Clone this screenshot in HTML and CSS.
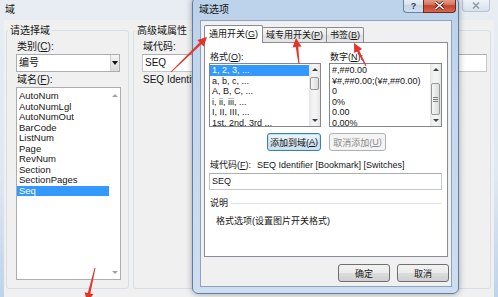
FILE: index.html
```html
<!DOCTYPE html>
<html lang="zh-CN">

<head>
    <meta charset="UTF-8">
    <meta name="viewport" content="width=device-width, initial-scale=1.0">
    <title>域</title>

    <link rel="stylesheet" href="styles.css">
</head>

<body>
    <div class="desk">

        <!-- 后面的 "域" 对话框 -->
        <div class="back">
            <div class="back-caption">
                <span class="back-title">域</span>
                <span class="back-close">
                    <svg width="8" height="7" viewBox="0 0 8 7"><path d="M1 .5 7 6.5M7 .5 1 6.5" stroke="#8d97a3" stroke-width="1.4" fill="none"/></svg>
                </span>
            </div>

            <div class="back-client">
                <div class="group pick">
                    <div class="group-title">请选择域</div>
                    <div class="lbl">类别(<u>C</u>):</div>
                    <div class="combo">
                        <span class="combo-text">编号</span>
                        <span class="combo-btn"><i class="tri-down"></i></span>
                    </div>
                    <div class="lbl">域名(<u>F</u>):</div>
                    <div class="list names">
                        <div class="items">
                            <div class="item">AutoNum</div>
                            <div class="item">AutoNumLgl</div>
                            <div class="item">AutoNumOut</div>
                            <div class="item">BarCode</div>
                            <div class="item">ListNum</div>
                            <div class="item">Page</div>
                            <div class="item">RevNum</div>
                            <div class="item">Section</div>
                            <div class="item">SectionPages</div>
                            <div class="item sel">Seq</div>
                        </div>
                        <div class="sb off">
                            <div class="sb-btn"><i class="tri-up"></i></div>
                            <div class="sb-fill"></div>
                            <div class="sb-btn"><i class="tri-down"></i></div>
                        </div>
                    </div>
                </div>

                <div class="group props">
                    <div class="group-title">高级域属性</div>
                    <div class="lbl">域代码:</div>
                    <div class="field wide">SEQ</div>
                    <div class="lbl">SEQ Identifier</div>
                </div>
            </div>
        </div>

        <!-- 前面的 "域选项" 对话框 -->
        <div class="front">
            <div class="front-caption">
                <span class="front-title">域选项</span>
                <div class="cap-btns">
                    <span class="cap-help">?</span>
                    <span class="cap-close">
                        <svg width="11" height="9" viewBox="0 0 11 9"><path d="M1.5 1 9.5 8M9.5 1 1.5 8" stroke="#4a1a12" stroke-width="3" fill="none"/><path d="M1.5 1 9.5 8M9.5 1 1.5 8" stroke="#fff" stroke-width="1.6" fill="none"/></svg>
                    </span>
                </div>
            </div>

            <div class="dlg">
                <div class="tabs">
                    <div class="tab on">通用开关(<u>G</u>)</div>
                    <div class="tab">域专用开关(<u>P</u>)</div>
                    <div class="tab">书签(<u>B</u>)</div>
                </div>

                <div class="page">
                    <div class="cols">
                        <div>
                            <div class="cap">格式(<u>O</u>):</div>
                            <div class="list fmt">
                                <div class="items">
                                    <div class="item sel">1, 2, 3, ...</div>
                                    <div class="item">a, b, c, ...</div>
                                    <div class="item">A, B, C, ...</div>
                                    <div class="item">i, ii, iii, ...</div>
                                    <div class="item">I, II, III, ...</div>
                                    <div class="item">1st, 2nd, 3rd ...</div>
                                </div>
                                <div class="sb">
                                    <div class="sb-btn"><i class="tri-up"></i></div>
                                    <div class="sb-thumb"></div>
                                    <div class="sb-fill"></div>
                                    <div class="sb-btn"><i class="tri-down"></i></div>
                                </div>
                            </div>
                        </div>
                        <div>
                            <div class="cap">数字(<u>N</u>):</div>
                            <div class="list num">
                                <div class="items">
                                    <div class="item">#,##0.00</div>
                                    <div class="item">¥#,##0.00;(¥#,##0.00)</div>
                                    <div class="item">0</div>
                                    <div class="item">0%</div>
                                    <div class="item">0.00</div>
                                    <div class="item">0.00%</div>
                                </div>
                                <div class="sb">
                                    <div class="sb-btn"><i class="tri-up"></i></div>
                                    <div class="sb-thumb"><i class="grip"></i></div>
                                    <div class="sb-fill"></div>
                                    <div class="sb-btn"><i class="tri-down"></i></div>
                                </div>
                            </div>
                        </div>
                    </div>

                    <div class="cols acts">
                        <div class="btn add">添加到域(<u>A</u>)</div>
                        <div class="btn off undo">取消添加(<u>U</u>)</div>
                    </div>

                    <div class="code">域代码(<u>F</u>):<span class="code-gap"></span>SEQ Identifier [Bookmark] [Switches]</div>
                    <div class="field">SEQ</div>

                    <div class="desc-head">说明</div>
                    <div class="desc">格式选项(设置图片开关格式)</div>
                </div>

                <div class="dlg-btns">
                    <div class="btn">确定</div>
                    <div class="btn">取消</div>
                </div>
            </div>
        </div>

        <!-- 标注用的红色箭头 -->
        <svg class="marks" width="498" height="297" viewBox="0 0 498 297">
            <polygon points="170.65,71.64 199.6,42.4 197.4,40.1 207,37 203.7,46.5 201.4,44.2 171.35,72.36" />
            <polygon points="298.5,64.06 295.74,47.09 292.6,47.5 296,38 301.5,46.4 298.32,46.79 299.5,63.94" />
            <polygon points="365.56,66.23 357.01,51.58 354.17,53.06 354,43 362.15,48.9 359.31,50.38 366.44,65.77" />
            <polygon points="94.51,267.89 87.8,292.94 84.68,292.21 87,302 93.44,294.27 90.32,293.54 95.49,268.11" />
        </svg>
    </div>
</body>

</html>
```

FILE: styles.css
```css
* {
    box-sizing: border-box;
}

body {
    margin: 0;
    font-family: "Liberation Sans", "Noto Sans CJK SC", sans-serif;
    font-size: 9px;
    color: #151515;
}

.desk {
    position: relative;
    width: 498px;
    height: 297px;
    overflow: hidden;
}

/* ---------- back dialog ---------- */

.back {
    height: 100%;
    display: flex;
    flex-direction: column;
    background: linear-gradient(#e8edf3, #dfe7f0 60%, #bfd3ea);
}

.back-caption {
    height: 20px;
    display: flex;
    align-items: flex-start;
    padding-left: 5px;
}

.back-title {
    margin-top: 4px;
    font-size: 10px;
    line-height: 12px;
}

.back-close {
    margin-left: auto;
    margin-right: 8px;
    width: 28px;
    height: 12px;
    display: flex;
    align-items: center;
    justify-content: center;
    border: 1px solid #b4c2d3;
    border-top: none;
    border-radius: 0 0 4px 4px;
    background: linear-gradient(#eef3f8, #d7e1ec);
}

.back-client {
    flex: 1;
    display: flex;
    gap: 4px;
    margin: 0 4px;
    padding: 10px 3px 8px 2px;
    background: #f0f0f0;
}

.group {
    border: 1px solid #d5dfe5;
    border-radius: 3px;
}

.pick {
    width: 123px;
    padding-left: 9px;
}

.props {
    flex: 1;
    padding-left: 8px;
}

.group-title {
    width: max-content;
    margin-top: -6px;
    padding: 0 2px;
    background: #f0f0f0;
    font-size: 10px;
    line-height: 12px;
}

.pick .group-title {
    margin-left: -8px;
}

.props .group-title {
    margin-left: -7px;
}

.lbl {
    margin-top: 2px;
    padding-left: 1px;
    font-size: 10px;
    line-height: 12px;
    white-space: nowrap;
}

.group-title + .lbl {
    margin-top: 4px;
}

.combo {
    display: flex;
    width: 104px;
    height: 18px;
    margin-top: 1px;
    border: 1px solid #abadb3;
    background: #fff;
}

.combo-text {
    flex: 1;
    padding-left: 2px;
    font-size: 10px;
    line-height: 16px;
}

.combo-btn {
    width: 9px;
    display: flex;
    align-items: center;
    justify-content: center;
    border-left: 1px solid #cfcfcf;
    background: linear-gradient(#f4f4f4, #dadada);
}

.tri-down {
    width: 0;
    height: 0;
    border-left: 3px solid transparent;
    border-right: 3px solid transparent;
    border-top: 4px solid #111;
}

.tri-up {
    width: 0;
    height: 0;
    border-left: 3px solid transparent;
    border-right: 3px solid transparent;
    border-bottom: 3px solid #404040;
}

.field {
    height: 17px;
    margin-top: 2px;
    padding-left: 2px;
    border: 1px solid #c3c7cd;
    border-top-color: #abadb3;
    background: #fff;
    line-height: 15px;
}

.field.wide {
    width: 345px;
    height: 18px;
    margin-top: 1px;
    font-size: 10px;
    line-height: 16px;
}

/* ---------- list boxes ---------- */

.list {
    display: flex;
    border: 1px solid #828790;
    background: #fff;
    overflow: hidden;
}

.items {
    flex: 1;
    min-width: 0;
}

.item {
    padding-left: 2px;
    white-space: nowrap;
    overflow: hidden;
}

.item.sel {
    background: #3399ff;
    color: #fff;
}

.names {
    width: 105px;
    height: 193px;
    margin-top: 1px;
    border-color: #abadb3;
}

.names .items {
    padding-top: 3px;
    font-size: 9.5px;
    line-height: 10.5px;
}

.fmt,
.num {
    height: 64px;
}

.fmt .items,
.num .items {
    padding-top: 1px;
    line-height: 10.6px;
}

.sb {
    width: 11px;
    display: flex;
    flex-direction: column;
    background: linear-gradient(90deg, #e6e6e6, #f4f4f4 40%, #f4f4f4 60%, #e6e6e6);
}

.sb-btn {
    height: 11px;
    display: flex;
    align-items: center;
    justify-content: center;
}

.sb .tri-down {
    border-top: 3px solid #404040;
}

.sb-fill {
    flex: 1;
}

.sb-thumb {
    margin: 0 1px;
    border: 1px solid #979797;
    border-radius: 2px;
    background: linear-gradient(90deg, #f6f6f6, #dcdcdc);
}

.fmt .sb-thumb {
    margin-top: 2px;
    height: 13px;
}

.num .sb-thumb {
    margin-top: 8px;
    height: 32px;
    display: flex;
    align-items: center;
    justify-content: center;
}

.grip {
    width: 5px;
    height: 5px;
    background: repeating-linear-gradient(#7e7e7e 0 1px, transparent 1px 2px);
}

.sb.off {
    background: #fff;
}

.sb.off .sb-btn {
    height: 14px;
}

.sb.off .tri-up {
    border-bottom-color: #a3a3a3;
}

.sb.off .tri-down {
    border-top-color: #a3a3a3;
}

/* ---------- front dialog ---------- */

.front {
    position: absolute;
    left: 192px;
    top: -3px;
    width: 267px;
    border: 1px solid #5d7ea6;
    border-radius: 6px;
    background: linear-gradient(#bcd2ea, #c6d8ed 40%, #cddef1);
    box-shadow: 0 0 6px rgba(0, 0, 0, 0.35);
}

.front-caption {
    height: 22px;
    display: flex;
    align-items: flex-start;
    padding-left: 6px;
}

.front-title {
    margin-top: 6px;
    font-size: 10px;
    line-height: 12px;
}

.cap-btns {
    margin-left: auto;
    margin-right: 2px;
    display: flex;
}

.cap-help {
    width: 20px;
    height: 15px;
    padding-top: 2px;
    border: 1px solid #6a83a3;
    border-top: none;
    border-right: none;
    border-radius: 0 0 0 4px;
    background: linear-gradient(#eef3f9, #d6e2ef 50%, #c5d5e7 51%, #d2def0);
    color: #2d3e55;
    font-weight: bold;
    font-size: 9px;
    text-align: center;
    line-height: 12px;
}

.cap-close {
    width: 33px;
    height: 15px;
    display: flex;
    align-items: center;
    justify-content: center;
    padding-top: 1px;
    border: 1px solid #6a2a20;
    border-top: none;
    border-radius: 0 0 4px 0;
    background: linear-gradient(#eaa898, #d77a63 45%, #c5442c 55%, #d8694d);
}

.dlg {
    margin: 0 6px 6px 7px;
    padding: 6px 3px 4px;
    border: 1px solid #8ca3bf;
    background: #f0f0f0;
}

.tabs {
    display: flex;
    align-items: flex-end;
    height: 15px;
}

.tab {
    height: 15px;
    padding: 0 3px;
    border: 1px solid #898c95;
    border-bottom: none;
    border-radius: 2px 2px 0 0;
    background: linear-gradient(#f4f4f4, #ececec 50%, #dfdfdf 51%, #e6e6e6);
    line-height: 14px;
    white-space: nowrap;
}

.tab + .tab {
    margin-left: -1px;
}

.tab.on {
    position: relative;
    z-index: 1;
    height: 18px;
    margin-bottom: -1px;
    padding: 0 4px;
    background: #fff;
    line-height: 16px;
}

.page {
    height: 215px;
    padding: 8px 5px 0 4px;
    border: 1px solid #898c95;
    background: #fff;
}

.cols {
    display: grid;
    grid-template-columns: 112px 113px;
    column-gap: 8px;
}

.cap {
    padding-left: 1px;
    line-height: 12px;
}

.acts {
    margin-top: 6px;
}

.btn {
    height: 18px;
    display: flex;
    align-items: center;
    justify-content: center;
    border: 1px solid #707070;
    border-radius: 3px;
    background: linear-gradient(#f2f2f2, #ebebeb 50%, #dddddd 51%, #cfcfcf);
    white-space: nowrap;
}

.add {
    justify-self: end;
    width: 54px;
    border-color: #3c7fb1;
    background: linear-gradient(#eef5fa, #dde9f2 50%, #cbdbe8 51%, #d6e4ef);
    box-shadow: inset 0 0 0 1px #b9e4f7;
}

.btn.off {
    border-color: #adb2b5;
    background: #f4f4f4;
    color: #8a8a8a;
}

.undo {
    width: 57px;
}

.code {
    margin-top: 8px;
    padding-left: 1px;
    line-height: 12px;
    white-space: nowrap;
}

.code-gap {
    margin-left: 6px;
}

.desc-head {
    display: flex;
    align-items: center;
    gap: 3px;
    margin-top: 7px;
    padding-left: 1px;
    line-height: 12px;
}

.desc-head::after {
    content: "";
    flex: 1;
    border-top: 1px solid #dde4ea;
}

.desc {
    margin-top: 6px;
    margin-left: 7px;
    line-height: 12px;
}

.dlg-btns {
    display: flex;
    justify-content: flex-end;
    gap: 7px;
    margin-top: 7px;
    margin-right: -1px;
}

.dlg-btns .btn {
    width: 52px;
}

/* ---------- red marks ---------- */

.marks {
    position: absolute;
    left: 0;
    top: 0;
    z-index: 5;
    fill: #e5332a;
}
```
